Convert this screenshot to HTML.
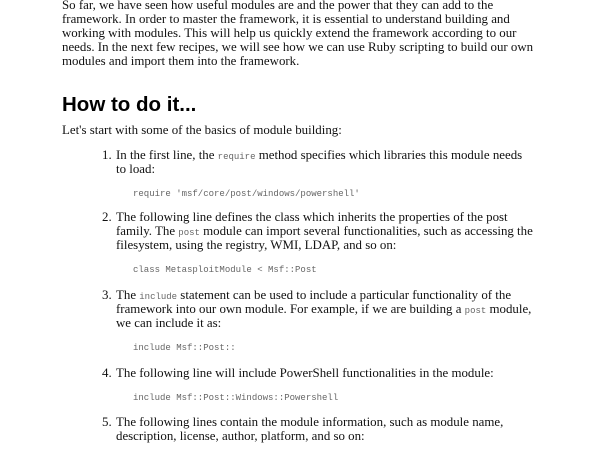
<!DOCTYPE html>
<html><head><style>
body{margin:0;width:600px;height:450px;background:#fff;overflow:hidden;position:relative;font-family:"Liberation Serif",serif;font-size:12.9px;color:#111}
.l{position:absolute;white-space:nowrap;line-height:14px}
code,.c{font-family:"Liberation Mono",monospace;font-size:9px;color:#666}
h1{position:absolute;left:62px;top:93px;margin:0;font-family:"Liberation Sans",sans-serif;font-weight:bold;font-size:20.5px;line-height:24px;color:#000}
</style></head><body>
<div class="l" style="left:62px;top:-2px">So far, we have seen how useful modules are and the power that they can add to the</div>
<div class="l" style="left:62px;top:12px">framework. In order to master the framework, it is essential to understand building and</div>
<div class="l" style="left:62px;top:26px">working with modules. This will help us quickly extend the framework according to our</div>
<div class="l" style="left:62px;top:40px">needs. In the next few recipes, we will see how we can use Ruby scripting to build our own</div>
<div class="l" style="left:62px;top:54px">modules and import them into the framework.</div>
<h1>How to do it...</h1>
<div class="l" style="left:62px;top:123px">Let's start with some of the basics of module building:</div>
<div class="l" style="left:102px;top:148px">1.</div>
<div class="l" style="left:116px;top:148px">In the first line, the <code>require</code> method specifies which libraries this module needs</div>
<div class="l" style="left:116px;top:162px">to load:</div>
<div class="l c" style="left:133px;top:187px">require 'msf/core/post/windows/powershell'</div>
<div class="l" style="left:102px;top:210px">2.</div>
<div class="l" style="left:116px;top:210px">The following line defines the class which inherits the properties of the post</div>
<div class="l" style="left:116px;top:224px">family. The <code>post</code> module can import several functionalities, such as accessing the</div>
<div class="l" style="left:116px;top:238px">filesystem, using the registry, WMI, LDAP, and so on:</div>
<div class="l c" style="left:133px;top:263px">class MetasploitModule &lt; Msf::Post</div>
<div class="l" style="left:102px;top:288px">3.</div>
<div class="l" style="left:116px;top:288px">The <code>include</code> statement can be used to include a particular functionality of the</div>
<div class="l" style="left:116px;top:302px">framework into our own module. For example, if we are building a <code>post</code> module,</div>
<div class="l" style="left:116px;top:316px">we can include it as:</div>
<div class="l c" style="left:133px;top:341px">include Msf::Post::</div>
<div class="l" style="left:102px;top:366px">4.</div>
<div class="l" style="left:116px;top:366px">The following line will include PowerShell functionalities in the module:</div>
<div class="l c" style="left:133px;top:391px">include Msf::Post::Windows::Powershell</div>
<div class="l" style="left:102px;top:415px">5.</div>
<div class="l" style="left:116px;top:415px">The following lines contain the module information, such as module name,</div>
<div class="l" style="left:116px;top:429px">description, license, author, platform, and so on:</div>
</body></html>
